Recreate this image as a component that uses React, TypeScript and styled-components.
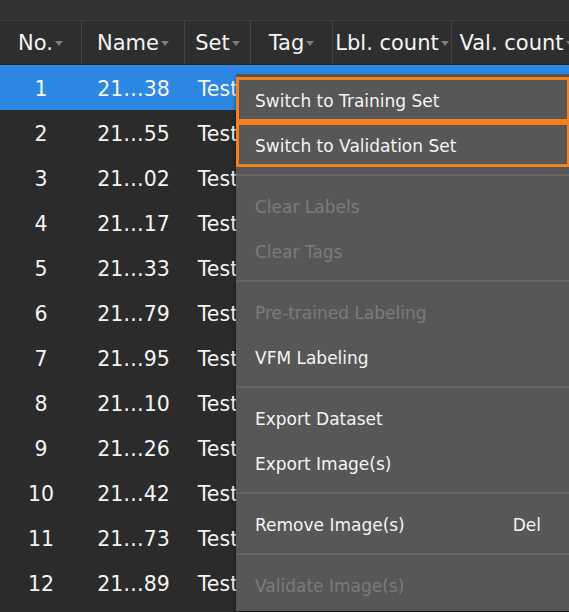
import styled, { createGlobalStyle } from "styled-components";

const GlobalStyle = createGlobalStyle`
  html, body {
    margin: 0;
    padding: 0;
    background: #2b2b2b;
    overflow: hidden;
  }
  * {
    box-sizing: border-box;
  }
`;

const COLS = "82px 103px 66px 82px 119px 130px";

const Page = styled.div`
  position: relative;
  width: 569px;
  height: 612px;
  overflow: hidden;
  background: #2b2b2b;
  font-family: "DejaVu Sans", "Noto Sans", sans-serif;
  color: #f4f4f4;
`;

const TopBar = styled.div`
  height: 21px;
  background: #333333;
  border-bottom: 1px solid #3e3e3e;
`;

const HeaderRow = styled.div`
  display: grid;
  grid-template-columns: ${COLS};
  height: 44px;
  background: #2e2e2e;
  border-bottom: 1px solid #262626;
`;

const HeaderCell = styled.div`
  display: flex;
  align-items: center;
  justify-content: center;
  gap: 2px;
  font-size: 21px;
  white-space: nowrap;
  overflow: hidden;
  border-right: 1px solid #444444;
`;

const SortArrow = styled.span`
  flex: none;
  width: 0;
  height: 0;
  border-left: 4px solid transparent;
  border-right: 4px solid transparent;
  border-top: 5px solid #7c7c7c;
  margin-top: 2px;
`;

const Row = styled.div<{ $selected?: boolean }>`
  display: grid;
  grid-template-columns: ${COLS};
  height: 45px;
  background: ${(p) => (p.$selected ? "#2d88e3" : "transparent")};
`;

const Cell = styled.div`
  display: flex;
  align-items: center;
  justify-content: center;
  padding-top: 2px;
  font-size: 20.5px;
  white-space: nowrap;
  overflow: hidden;
`;

const Menu = styled.div`
  position: absolute;
  left: 236px;
  top: 74px;
  width: 334px;
  padding-top: 3px;
  padding-bottom: 4px;
  background: #575757;
  box-shadow: 0 3px 4px rgba(0, 0, 0, 0.55);
`;

const MenuItem = styled.div<{ $disabled?: boolean; $marked?: boolean }>`
  display: flex;
  align-items: center;
  justify-content: space-between;
  height: 45px;
  padding: 2px 29px 0 19px;
  font-size: 17px;
  color: ${(p) => (p.$disabled ? "#7b7b7b" : "#f4f4f4")};
  outline: ${(p) => (p.$marked ? "3px solid #f5801e" : "none")};
  outline-offset: -3px;
`;

const Separator = styled.div`
  height: 2px;
  margin: 7px 0;
  background: #666666;
`;

const rows = [
  ["1", "21…38"],
  ["2", "21…55"],
  ["3", "21…02"],
  ["4", "21…17"],
  ["5", "21…33"],
  ["6", "21…79"],
  ["7", "21…95"],
  ["8", "21…10"],
  ["9", "21…26"],
  ["10", "21…42"],
  ["11", "21…73"],
  ["12", "21…89"],
];

const headers = ["No.", "Name", "Set", "Tag", "Lbl. count", "Val. count"];

export default function App() {
  return (
    <Page>
      <GlobalStyle />
      <TopBar />
      <HeaderRow>
        {headers.map((h) => (
          <HeaderCell key={h}>
            {h}
            <SortArrow />
          </HeaderCell>
        ))}
      </HeaderRow>
      {rows.map(([no, name], i) => (
        <Row key={no} $selected={i === 0}>
          <Cell>{no}</Cell>
          <Cell>{name}</Cell>
          <Cell>Test</Cell>
          <Cell />
          <Cell />
          <Cell />
        </Row>
      ))}
      <Menu>
        <MenuItem $marked>Switch to Training Set</MenuItem>
        <MenuItem $marked>Switch to Validation Set</MenuItem>
        <Separator />
        <MenuItem $disabled>Clear Labels</MenuItem>
        <MenuItem $disabled>Clear Tags</MenuItem>
        <Separator />
        <MenuItem $disabled>Pre-trained Labeling</MenuItem>
        <MenuItem>VFM Labeling</MenuItem>
        <Separator />
        <MenuItem>Export Dataset</MenuItem>
        <MenuItem>Export Image(s)</MenuItem>
        <Separator />
        <MenuItem>
          <span>Remove Image(s)</span>
          <span>Del</span>
        </MenuItem>
        <Separator />
        <MenuItem $disabled>Validate Image(s)</MenuItem>
      </Menu>
    </Page>
  );
}
